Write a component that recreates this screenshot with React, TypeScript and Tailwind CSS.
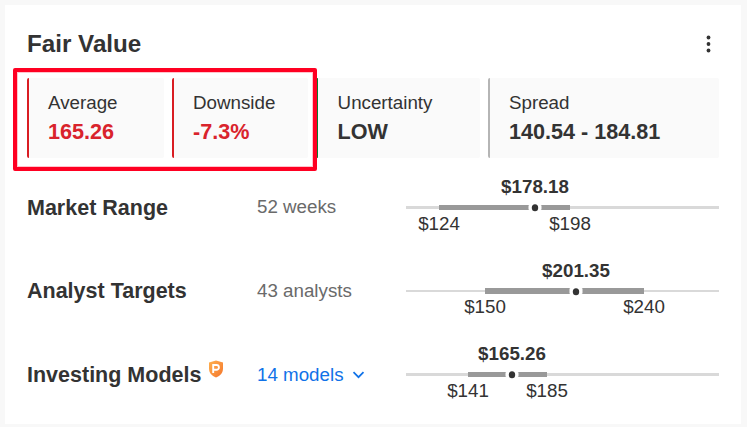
import clsx from "clsx";

type Tile = {
  label: string;
  value: string;
  width: string;
  padding: string;
  border: string;
  color: string;
};

type Range = {
  title: string;
  source: string;
  link?: boolean;
  price: string;
  low: string;
  high: string;
  from: number;
  to: number;
  at: number;
  barTop: number;
  barHeight: number;
  lineTop: number;
  lineHeight: number;
};

const TRACK_WIDTH = 313;

const tiles: Tile[] = [
  { label: "Average", value: "165.26", width: "w-[137px]", padding: "pl-[19px]", border: "bg-[#d91d23]", color: "text-[#d9232c]" },
  { label: "Downside", value: "-7.3%", width: "w-[136px]", padding: "pl-[19px]", border: "bg-[#d91d23]", color: "text-[#d9232c]" },
  { label: "Uncertainty", value: "LOW", width: "w-[164px]", padding: "pl-[19.6px]", border: "bg-[#0a7a2f]", color: "text-[#333333]" },
  { label: "Spread", value: "140.54 - 184.81", width: "w-[231px]", padding: "pl-[19px]", border: "bg-[#b5b5b5]", color: "text-[#333333]" },
];

const ranges: Range[] = [
  {
    title: "Market Range", source: "52 weeks", price: "$178.18", low: "$124", high: "$198",
    from: 33, to: 164, at: 129, barTop: 5, barHeight: 5, lineTop: 6, lineHeight: 3,
  },
  {
    title: "Analyst Targets", source: "43 analysts", price: "$201.35", low: "$150", high: "$240",
    from: 79, to: 238, at: 170, barTop: 4, barHeight: 6, lineTop: 6, lineHeight: 2,
  },
  {
    title: "Investing Models", source: "14 models", link: true, price: "$165.26", low: "$141", high: "$185",
    from: 62, to: 141, at: 106, barTop: 5, barHeight: 5, lineTop: 6, lineHeight: 3,
  },
];

function ProBadge() {
  return (
    <svg width="16" height="18" viewBox="0 0 16 18" className="mb-[12px] ml-[7px]">
      <defs>
        <linearGradient id="pro" x1="0" y1="0" x2="1" y2="1">
          <stop offset="0" stopColor="#ffb14e" />
          <stop offset="1" stopColor="#f4752c" />
        </linearGradient>
      </defs>
      <path d="M1 2.400 8 .5l7 1.900v6.200c0 4.200-2.600 7.200-7 9-4.400-1.800-7-4.800-7-9Z" fill="url(#pro)" />
      <path d="M5.200 13V5h3.300a2.400 2.400 0 0 1 0 4.800H5.200" fill="none" stroke="#fff" strokeWidth="1.900" />
    </svg>
  );
}

function StatTile({ tile }: { tile: Tile }) {
  return (
    <div className={clsx("flex h-20 overflow-hidden rounded-[2px] bg-[#fafafa]", tile.width)}>
      <div className={clsx("w-[2px]", tile.border)} />
      <div className={clsx("whitespace-nowrap pt-[11px]", tile.padding)}>
        <p className="text-[18.75px] leading-7">{tile.label}</p>
        <p className={clsx("text-[21.6px] leading-[30px] font-bold", tile.color)}>{tile.value}</p>
      </div>
    </div>
  );
}

function RangeTrack({ range }: { range: Range }) {
  return (
    <div className="relative w-[313px] text-[18.75px] leading-6">
      <div className="h-6 w-0 leading-[21.600px] font-bold" style={{ marginLeft: range.at }}>
        <span className="flex justify-center whitespace-nowrap">{range.price}</span>
      </div>
      <svg width={TRACK_WIDTH} height="15" className="block">
        <rect y={range.lineTop} width={TRACK_WIDTH} height={range.lineHeight} fill="#d9d9d9" />
        <rect x={range.from} y={range.barTop} width={range.to - range.from} height={range.barHeight} fill="#999999" />
        <rect x={range.at - 6.500} y={range.barTop} width="13" height={range.barHeight} rx="1" fill="#ffffff" />
        <ellipse cx={range.at} cy="7.700" rx="3.200" ry="3.500" fill="#333333" />
      </svg>
      <div className="absolute top-[35.600px] flex w-0 justify-center" style={{ left: range.from }}>
        {range.low}
      </div>
      <div className="absolute top-[35.600px] flex w-0 justify-center" style={{ left: range.to }}>
        {range.high}
      </div>
    </div>
  );
}

function RangeRow({ range }: { range: Range }) {
  return (
    <div className="flex h-[62px]">
      <div className="flex h-[63px] w-[230px] items-center whitespace-nowrap">
        <h3 className="text-[21.5px] leading-7 font-bold">{range.title}</h3>
        {range.link && <ProBadge />}
      </div>
      <div
        className={clsx(
          "flex w-[149px] items-center text-[18.75px] whitespace-nowrap",
          range.link ? "h-16 text-[#1072e8]" : "h-[62.8px] text-[#6a6a6a]",
        )}
      >
        {range.source}
        {range.link && (
          <svg width="13" height="8" viewBox="0 0 13 8" fill="none" className="ml-[8px]">
            <path d="m1.500 1.200 5 5 5-5" stroke="currentColor" strokeWidth="1.700" />
          </svg>
        )}
      </div>
      <RangeTrack range={range} />
    </div>
  );
}

export default function App() {
  return (
    <div className="h-[427px] w-[747px] overflow-hidden bg-[#f8f8f8] pt-[5px] pl-[5px] font-['Liberation_Sans',Arial,sans-serif] text-[#333333]">
      <section className="relative h-[419px] w-[736px] bg-white pt-[23px] pl-[22px]">
        <header className="flex h-8 w-[692px] items-center justify-between">
          <h2 className="text-[24.2px] leading-8 font-bold">Fair Value</h2>
          <svg width="8" height="20" viewBox="0 0 8 20" fill="#333333" className="mr-[7px]">
            <circle cx="4.500" cy="3.500" r="1.900" />
            <circle cx="4.500" cy="10" r="1.900" />
            <circle cx="4.500" cy="16.500" r="1.900" />
          </svg>
        </header>
        <div className="mt-[18px] flex gap-2">
          {tiles.map((tile) => (
            <StatTile key={tile.label} tile={tile} />
          ))}
        </div>
        <div className="mt-[18px] flex flex-col gap-[21.500px]">
          {ranges.map((range) => (
            <RangeRow key={range.title} range={range} />
          ))}
        </div>
        <div className="absolute top-[63px] left-[8px] h-[103px] w-[304px] rounded-[2px] border-[4px] border-[#ff0022] shadow-[inset_0_0_0_1px_#ffc4cc]" />
      </section>
    </div>
  );
}
